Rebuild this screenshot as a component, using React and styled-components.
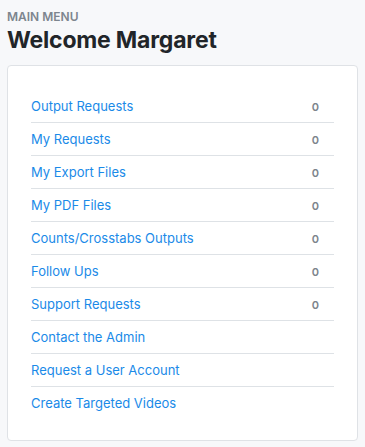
import React from "react";
import styled, { createGlobalStyle } from "styled-components";

const GlobalStyle = createGlobalStyle`
  html, body {
    margin: 0;
    padding: 0;
    background: #f7f8fa;
    font-family: Inter, "Noto Sans", sans-serif;
  }
`;

const Page = styled.div`
  padding: 9px 7px 8px 7px;
`;

const Eyebrow = styled.div`
  font-size: 12px;
  font-weight: 600;
  color: #7d858e;
  text-transform: uppercase;
  line-height: 15px;
`;

const Title = styled.h1`
  margin: 2px 0 11px;
  font-size: 23px;
  font-weight: 700;
  color: #212529;
  line-height: 28px;
  letter-spacing: -0.2px;
`;

const Card = styled.div`
  background: #fff;
  border: 1px solid #dfe2e6;
  border-radius: 4px;
  padding: 24px 23px 20px 23px;
`;

const List = styled.ul`
  list-style: none;
  margin: 0;
  padding: 0;
`;

const Item = styled.li`
  display: flex;
  align-items: center;
  justify-content: space-between;
  height: 33px;
  border-bottom: 1px solid ${(p) => (p.last ? "transparent" : "#dee2e6")};
  box-sizing: border-box;
`;

const Link = styled.a`
  color: #1a8ae8;
  font-size: 13px;
  text-decoration: none;
  cursor: pointer;
`;

const Count = styled.span`
  font-size: 11px;
  font-weight: 600;
  color: #7b838b;
  padding-right: 15px;
  margin-top: 2px;
`;

const items = [
  { label: "Output Requests", count: 0 },
  { label: "My Requests", count: 0 },
  { label: "My Export Files", count: 0 },
  { label: "My PDF Files", count: 0 },
  { label: "Counts/Crosstabs Outputs", count: 0 },
  { label: "Follow Ups", count: 0 },
  { label: "Support Requests", count: 0 },
  { label: "Contact the Admin" },
  { label: "Request a User Account" },
  { label: "Create Targeted Videos" },
];

export default function App() {
  return (
    <Page>
      <GlobalStyle />
      <Eyebrow>Main Menu</Eyebrow>
      <Title>Welcome Margaret</Title>
      <Card>
        <List>
          {items.map((it, i) => (
            <Item key={it.label} last={i === items.length - 1}>
              <Link>{it.label}</Link>
              {it.count !== undefined && <Count>{it.count}</Count>}
            </Item>
          ))}
        </List>
      </Card>
    </Page>
  );
}
